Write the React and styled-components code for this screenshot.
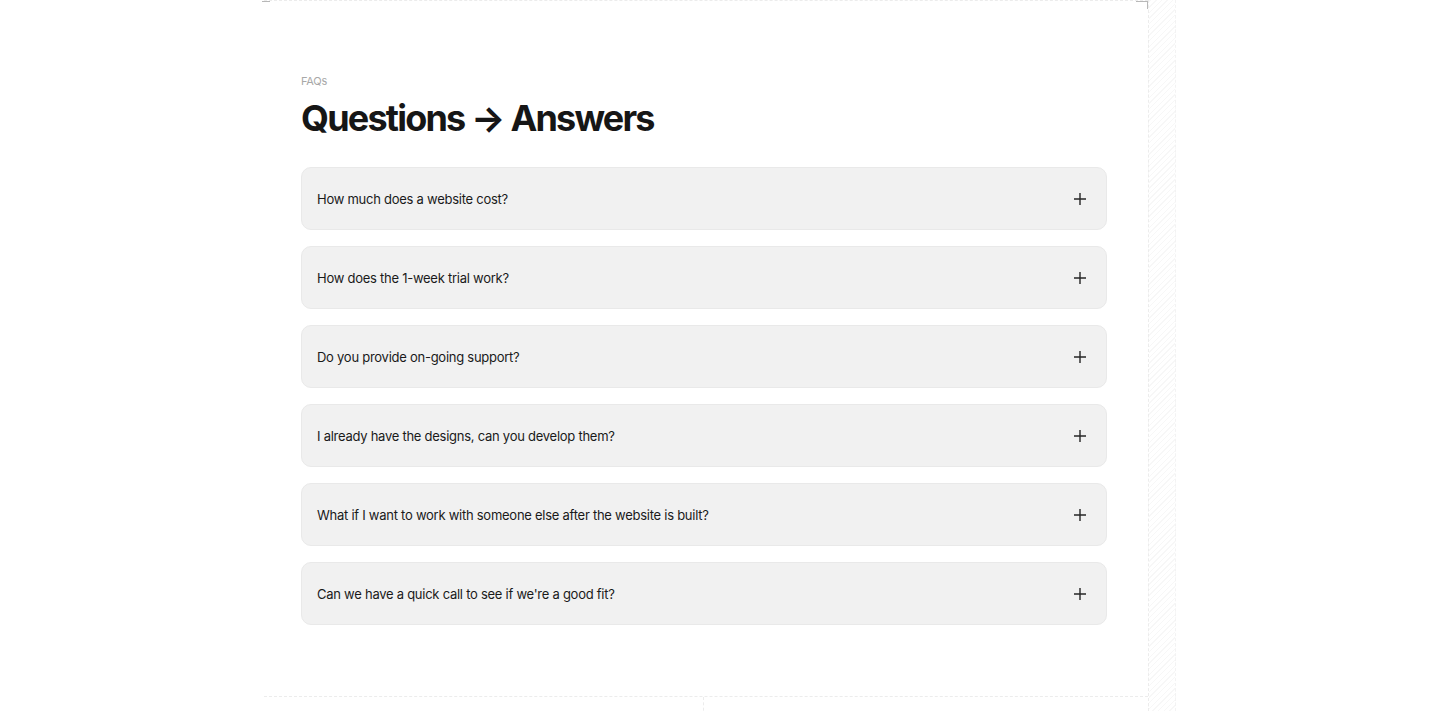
import React from "react";
import styled, { createGlobalStyle } from "styled-components";

const GlobalStyle = createGlobalStyle`
  html, body {
    margin: 0;
    padding: 0;
    background: #ffffff;
    font-family: Inter, "Noto Sans", "Liberation Sans", sans-serif;
    -webkit-font-smoothing: antialiased;
  }
  * { box-sizing: border-box; }
`;

const Page = styled.div`
  display: flex;
  min-height: 711px;
  overflow: hidden;
`;

const Gutter = styled.div`
  width: 264px;
  flex-shrink: 0;
`;

const Column = styled.main`
  position: relative;
  width: 884px;
  flex-shrink: 0;
  border-top: 1px dashed #ececec;
`;

const Hatch = styled.div`
  width: 28px;
  flex-shrink: 0;
  border-left: 1px dashed #ececec;
  border-right: 1px dashed #f3f3f3;
  background: repeating-linear-gradient(
    -45deg,
    #ffffff 0px,
    #ffffff 3px,
    #f7f7f7 3px,
    #f7f7f7 4px
  );
`;

const CornerMark = styled.span`
  position: absolute;
  top: 0;
  ${(p) => (p.$side === "left" ? "left: -2px;" : "right: 0;")}
  width: ${(p) => (p.$side === "left" ? "8px" : "12px")};
  height: 8px;
  border-top: 1px solid #b8b8b8;
  ${(p) => p.$side === "right" && "border-right: 1px solid #b8b8b8;"}
`;

const Section = styled.section`
  padding: 73px 41px 71px 37px;
`;

const Eyebrow = styled.div`
  font-size: 11px;
  line-height: 14px;
  color: #a8a8a8;
  letter-spacing: -0.02em;
`;

const Title = styled.h2`
  margin: 6px 0 25px;
  font-size: 36px;
  line-height: 48px;
  font-weight: 700;
  letter-spacing: -0.05em;
  color: #161616;
`;

const List = styled.div`
  display: flex;
  flex-direction: column;
  gap: 16px;
`;

const Item = styled.button`
  display: flex;
  align-items: center;
  justify-content: space-between;
  width: 100%;
  height: 63px;
  padding: 0 19px 0 15px;
  border: 1px solid #e9e9e9;
  border-radius: 10px;
  background: #f1f1f1;
  font-family: inherit;
  font-size: 13px;
  color: #1a1a1a;
  text-align: left;
  cursor: pointer;
  letter-spacing: -0.02em;
`;

const Plus = styled.svg`
  width: 14px;
  height: 14px;
  flex-shrink: 0;
`;

const Footer = styled.div`
  display: grid;
  grid-template-columns: 439px 1fr;
  border-top: 1px dashed #ececec;
  height: 20px;
`;

const FooterCell = styled.div`
  & + & {
    border-left: 1px dashed #ececec;
  }
`;

const questions = [
  "How much does a website cost?",
  "How does the 1-week trial work?",
  "Do you provide on-going support?",
  "I already have the designs, can you develop them?",
  "What if I want to work with someone else after the website is built?",
  "Can we have a quick call to see if we're a good fit?",
];

const PlusIcon = () => (
  <Plus viewBox="0 0 14 14" fill="none">
    <path d="M7 1v12M1 7h12" stroke="#262626" strokeWidth="1.4" />
  </Plus>
);

export default function App() {
  return (
    <>
      <GlobalStyle />
      <Page>
        <Gutter />
        <Column>
          <CornerMark $side="left" />
          <CornerMark $side="right" />
          <Section>
            <Eyebrow>FAQs</Eyebrow>
            <Title>Questions → Answers</Title>
            <List>
              {questions.map((q) => (
                <Item key={q}>
                  <span>{q}</span>
                  <PlusIcon />
                </Item>
              ))}
            </List>
          </Section>
          <Footer>
            <FooterCell />
            <FooterCell />
          </Footer>
        </Column>
        <Hatch />
      </Page>
    </>
  );
}
